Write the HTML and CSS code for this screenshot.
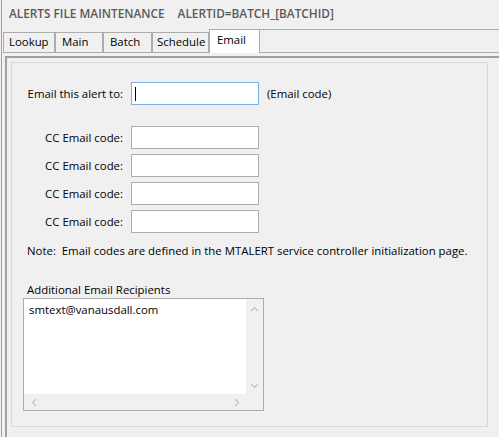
FILE: index.html
```html
<!DOCTYPE html>
<html>
<head>
<meta charset="utf-8">
<link rel="stylesheet" href="styles.css">
</head>
<body>
<div class="app">
  <div class="title">ALERTS FILE MAINTENANCE<span class="title-id">ALERTID=BATCH_[BATCHID]</span></div>
  <div class="tabs">
    <div class="tab tab-lookup">Lookup</div>
    <div class="tab tab-main">Main</div>
    <div class="tab tab-batch">Batch</div>
    <div class="tab tab-schedule">Schedule</div>
    <div class="tab tab-email active">Email</div>
    <div class="tab-fill"></div>
  </div>
  <div class="frame">
    <div class="panel">
      <div class="form">
        <div class="row row-main">
          <div class="label">Email this alert to:</div>
          <div class="input focus"><span class="caret"></span></div>
          <div class="hint">(Email code)</div>
        </div>
        <div class="row">
          <div class="label">CC Email code:</div>
          <div class="input"></div>
        </div>
        <div class="row">
          <div class="label">CC Email code:</div>
          <div class="input"></div>
        </div>
        <div class="row">
          <div class="label">CC Email code:</div>
          <div class="input"></div>
        </div>
        <div class="row">
          <div class="label">CC Email code:</div>
          <div class="input"></div>
        </div>
      </div>
      <div class="note">Note:&nbsp; Email codes are defined in the MTALERT service controller initialization page.</div>
      <div class="rcpt-label">Additional Email Recipients</div>
      <div class="textbox">
        <div class="tb-content">smtext@vanausdall.com</div>
        <div class="tb-vscroll">
          <svg width="9" height="6" viewBox="0 0 9 6"><path d="M1 5 L4.5 1.5 L8 5" fill="none" stroke="#c2c2c2" stroke-width="1.2"/></svg>
          <svg width="9" height="6" viewBox="0 0 9 6"><path d="M1 1 L4.5 4.5 L8 1" fill="none" stroke="#c2c2c2" stroke-width="1.2"/></svg>
        </div>
        <div class="tb-hscroll">
          <svg width="6" height="9" viewBox="0 0 6 9"><path d="M5 1 L1.5 4.5 L5 8" fill="none" stroke="#c2c2c2" stroke-width="1.2"/></svg>
          <svg width="6" height="9" viewBox="0 0 6 9"><path d="M1 1 L4.5 4.5 L1 8" fill="none" stroke="#c2c2c2" stroke-width="1.2"/></svg>
        </div>
        <div class="tb-corner"></div>
      </div>
    </div>
  </div>
</div>
</body>
</html>
```

FILE: styles.css
```css
html, body {
  margin: 0;
  padding: 0;
}
body {
  background: #f0f0f0;
  font-family: "Open Sans", "Noto Sans", sans-serif;
  font-size: 11.4px;
  color: #000;
  width: 499px;
  height: 437px;
  overflow: hidden;
}
.app {
  margin-left: 1px;
  border-left: 1px solid #a0a0a0;
  height: 437px;
  box-sizing: border-box;
  overflow: hidden;
}
.title {
  height: 29px;
  line-height: 26px;
  padding-left: 7px;
  font-size: 11.8px;
  font-weight: 600;
  color: #5a5a5a;
  white-space: nowrap;
}
.title-id {
  margin-left: 13px;
}
.tabs {
  display: flex;
  align-items: flex-end;
  height: 24px;
  margin-left: 1px;
}
.tab {
  height: 21px;
  box-sizing: border-box;
  border: 1px solid #acacac;
  line-height: 18px;
  padding: 0 5px;
  white-space: nowrap;
}
.tab-lookup { width: 52px; }
.tab-main { width: 48px; padding-left: 6px; }
.tab-batch { width: 49px; padding-left: 6px; }
.tab-schedule { width: 57px; padding-left: 4px; }
.tab.active {
  width: 51px;
  height: 24px;
  background: #fff;
  border-bottom: none;
  padding-left: 7px;
  line-height: 19px;
}
.tab-fill {
  flex: 1;
  height: 24px;
  box-sizing: border-box;
  border-top: 1px solid #acacac;
  border-bottom: 1px solid #acacac;
}
.frame {
  margin-top: 3px;
  margin-left: 3px;
  border-top: 2px solid #a0a0a0;
  border-left: 2px solid #a0a0a0;
  padding: 4px 0 0 4px;
  height: 400px;
}
.panel {
  width: 477px;
  height: 365px;
  box-sizing: border-box;
  border: 1px solid #dadada;
}
.form {
  padding-top: 19px;
}
.row {
  display: flex;
  align-items: center;
  height: 23px;
  margin-bottom: 5px;
}
.row-main {
  margin-bottom: 21px;
}
.label {
  width: 111px;
  margin-right: 8px;
  text-align: right;
  white-space: nowrap;
}
.input {
  width: 128px;
  height: 23px;
  box-sizing: border-box;
  border: 1px solid #adadad;
  background: #fff;
  display: flex;
  align-items: center;
  padding-left: 3px;
}
.input.focus {
  border-color: #7ab0e6;
}
.caret {
  width: 1px;
  height: 14px;
  background: #000;
}
.hint {
  margin-left: 8px;
}
.note {
  margin-top: 10px;
  padding-left: 15px;
  line-height: 15px;
  white-space: nowrap;
}
.rcpt-label {
  margin-top: 24px;
  padding-left: 15px;
  line-height: 16px;
}
.textbox {
  margin-left: 11px;
  width: 241px;
  height: 113px;
  box-sizing: border-box;
  border: 1px solid #adadad;
  display: grid;
  grid-template-columns: 1fr 17px;
  grid-template-rows: 1fr 16px;
}
.tb-content {
  background: #fff;
  padding: 3px 0 0 5px;
  line-height: 15px;
}
.tb-vscroll {
  background: #f0f0f0;
  display: flex;
  flex-direction: column;
  justify-content: space-between;
  align-items: center;
  padding: 7px 0 5px;
}
.tb-hscroll {
  background: #f0f0f0;
  display: flex;
  justify-content: space-between;
  align-items: center;
  padding: 0 6px 0 7px;
}
.tb-corner {
  background: #f0f0f0;
}
```
